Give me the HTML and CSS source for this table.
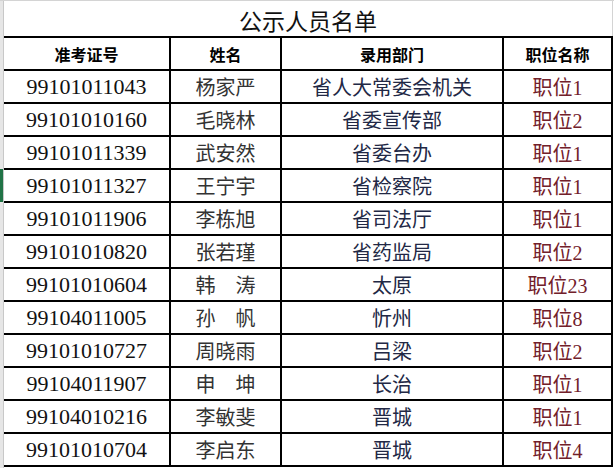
FILE: index.html
```html
<!DOCTYPE html>
<html lang="zh">
<head>
<meta charset="utf-8">
<title>公示人员名单</title>
<link rel="stylesheet" href="styles.css">
</head>
<body>
<div class="sheet">
  <div class="rowhead">
    <div class="rh rh-title"></div>
    <div class="rh"></div>
    <div class="rh"></div>
    <div class="rh"></div>
    <div class="rh"></div>
    <div class="rh active"></div>
  </div>
  <div class="main">
    <div class="title">公示人员名单</div>
    <table class="grid">
      <colgroup>
        <col class="c1"><col class="c2"><col class="c3"><col class="c4">
      </colgroup>
      <thead>
        <tr><th>准考证号</th><th>姓名</th><th>录用部门</th><th>职位名称</th></tr>
      </thead>
      <tbody>
        <tr><td class="id">99101011043</td><td class="nm">杨家严</td><td class="dp">省人大常委会机关</td><td class="ps">职位1</td></tr>
        <tr><td class="id">99101010160</td><td class="nm">毛晓林</td><td class="dp">省委宣传部</td><td class="ps">职位2</td></tr>
        <tr><td class="id">99101011339</td><td class="nm">武安然</td><td class="dp">省委台办</td><td class="ps">职位1</td></tr>
        <tr><td class="id">99101011327</td><td class="nm">王宁宇</td><td class="dp">省检察院</td><td class="ps">职位1</td></tr>
        <tr><td class="id">99101011906</td><td class="nm">李栋旭</td><td class="dp">省司法厅</td><td class="ps">职位1</td></tr>
        <tr><td class="id">99101010820</td><td class="nm">张若瑾</td><td class="dp">省药监局</td><td class="ps">职位2</td></tr>
        <tr><td class="id">99101010604</td><td class="nm">韩　涛</td><td class="dp">太原</td><td class="ps">职位23</td></tr>
        <tr><td class="id">99104011005</td><td class="nm">孙　帆</td><td class="dp">忻州</td><td class="ps">职位8</td></tr>
        <tr><td class="id">99101010727</td><td class="nm">周晓雨</td><td class="dp">吕梁</td><td class="ps">职位2</td></tr>
        <tr><td class="id">99104011907</td><td class="nm">申　坤</td><td class="dp">长治</td><td class="ps">职位1</td></tr>
        <tr><td class="id">99104010216</td><td class="nm">李敏斐</td><td class="dp">晋城</td><td class="ps">职位1</td></tr>
        <tr><td class="id">99101010704</td><td class="nm">李启东</td><td class="dp">晋城</td><td class="ps">职位4</td></tr>
      </tbody>
    </table>
  </div>
</div>
</body>
</html>
```

FILE: styles.css
```css
html, body {
  margin: 0;
  padding: 0;
  background: #ffffff;
}

body {
  width: 614px;
  height: 468px;
  overflow: hidden;
  font-family: "Liberation Serif", "Noto Sans CJK SC", serif;
}

.sheet {
  display: flex;
  align-items: flex-start;
  border-top: 1px solid #d4d4d4;
}

.rowhead {
  width: 3px;
  flex: 0 0 3px;
  background: #e6e6e6;
  border-right: 1px solid #c8c8c8;
  display: flex;
  flex-direction: column;
  height: 467px;
}

.rh {
  height: 33px;
  flex: 0 0 33px;
}

.rh-title {
  height: 36px;
  flex: 0 0 36px;
}

.rh.active {
  background: #217346;
}

.main {
  width: 609px;
  display: flex;
  flex-direction: column;
}

.title {
  height: 35px;
  line-height: 38px;
  text-align: center;
  font-family: "Noto Sans CJK SC", sans-serif;
  font-size: 23px;
  color: #111;
  border-right: 1px solid #d4d4d4;
  width: 608px;
}

.grid {
  border-collapse: collapse;
  table-layout: fixed;
  width: 608px;
}

.c1 { width: 166px; }
.c2 { width: 111px; }
.c3 { width: 222px; }
.c4 { width: 109px; }

.grid th,
.grid td {
  border: 2px solid #000;
  height: 31px;
  padding: 0;
  text-align: center;
  vertical-align: middle;
  white-space: nowrap;
}

.grid tr > :first-child {
  border-left: none;
}

.grid th {
  font-family: "Noto Sans CJK SC", sans-serif;
  font-weight: 700;
  font-size: 16px;
  color: #000;
}

.id {
  font-family: "Liberation Serif", serif;
  font-size: 22px;
  color: #111;
}

.nm {
  font-family: "Noto Sans CJK SC", sans-serif;
  font-size: 20px;
  color: #333;
}

.dp {
  font-family: "Noto Sans CJK SC", sans-serif;
  font-size: 20px;
  color: #222845;
}

.ps {
  font-family: "Liberation Serif", "Noto Sans CJK SC", serif;
  font-size: 20px;
  color: #72202a;
}
```
